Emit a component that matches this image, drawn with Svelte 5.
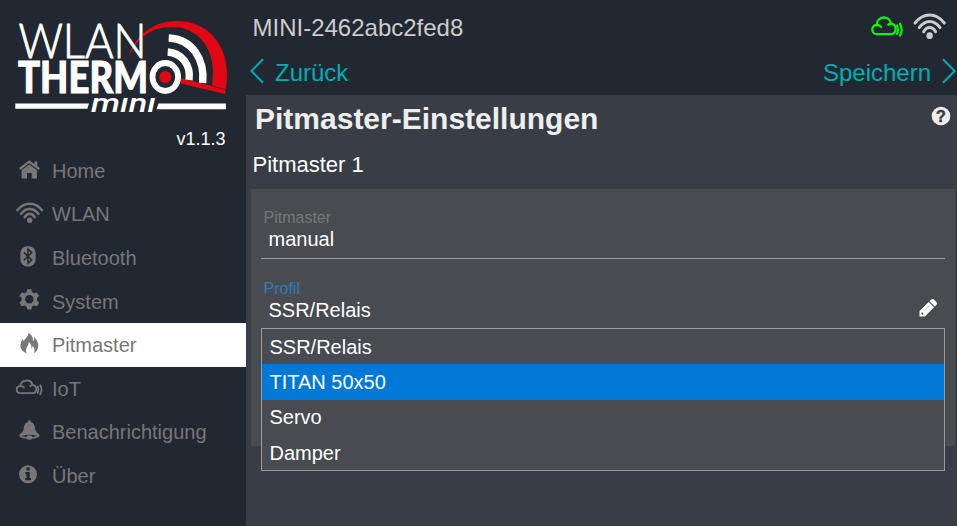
<script>
  const items = [
    { icon: 'home', label: 'Home' },
    { icon: 'wifi', label: 'WLAN' },
    { icon: 'bluetooth', label: 'Bluetooth' },
    { icon: 'gear', label: 'System' },
    { icon: 'fire', label: 'Pitmaster' },
    { icon: 'cloud', label: 'IoT' },
    { icon: 'bell', label: 'Benachrichtigung' },
    { icon: 'info', label: 'Über' }
  ];
  const active = 'Pitmaster';
  const options = ['SSR/Relais', 'TITAN 50x50', 'Servo', 'Damper'];
  let highlighted = $state('TITAN 50x50');
</script>

{#snippet wifi()}
  <g fill="none" stroke="currentColor" stroke-width="2.5" stroke-linecap="round">
    <path d="M3.4 11.2C10.3 2.7 21.1 2.7 28 11.2" />
    <path d="M7 14.8C12 8.3 19.4 8.3 24.4 14.8" />
    <path d="M10.7 18.1C13.3 13.6 18.1 13.6 20.7 18.1" />
  </g>
  <circle cx="15.7" cy="21.3" r="2.7" fill="currentColor" />
{/snippet}

{#snippet cloud()}
  <g fill="none" stroke="currentColor" stroke-width="1.8" stroke-linecap="round" stroke-linejoin="round">
    <path d="M6.6 19.2C1.6 19.2 1.4 12.4 6.3 12.2C6.8 5 17.3 4.6 18.6 11.2C23.5 11 23.6 19.2 18.8 19.2Z" />
    <path d="M6.3 12.2C8 11.8 9.3 12.5 10 13.7M18.6 11.2C17.6 11.2 16.8 11.5 16.2 12" />
    <path d="M23.7 12.6Q25 15.8 23.7 19M26.2 11.3Q28.8 15.8 26.2 20.2" />
  </g>
{/snippet}

<div class="app">
  <aside>
    <div class="brand">
      <svg class="logo" width="246" height="126" viewBox="0 0 246 126">
        <path fill="#e30613" d="M128.5 58C133 39 150 21 177 21C208 21 227 45 227 74Q227 85 225 94L181 83.5L180 78L212 86Q213 78 213 70C212 46 197 27 172 27C150 27 137 38 128.5 58Z" />
        <path d="M211 85.7L226 89.6" stroke="#222831" stroke-width="0.8" />
        <g fill="none" stroke="#fff" stroke-width="7.4">
          <path d="M168.7 38C192 39 205 59 202.7 83" />
          <path d="M167.7 52C182 53 191 65 189 80" />
        </g>
        <text class="wlan" x="18.5" y="57.5" textLength="128" lengthAdjust="spacingAndGlyphs">WLAN</text>
        <text class="therm" x="18" y="93" textLength="130" lengthAdjust="spacingAndGlyphs">THERM</text>
        <ellipse cx="165.3" cy="77" rx="12.8" ry="14" fill="#222831" stroke="#fff" stroke-width="5.8" />
        <circle cx="165.3" cy="77" r="6" fill="#e30613" />
        <path fill="#fff" d="M15.3 103.5H89L87.3 108.8H15.3ZM158.5 103.5H226V109.3H156.5Z" />
        <text class="mini" x="91" y="112" textLength="65" lengthAdjust="spacingAndGlyphs">mını</text>
      </svg>
      <div class="version">v1.1.3</div>
    </div>
    <nav>
      {#each items as item}
        <div class="item" class:active={item.label === active}>
          <svg width="32" height="30" viewBox="0 0 32 30">
            {#if item.icon === 'home'}
              <path d="M5.8 13L15.3 5.7L25.3 13" fill="none" stroke="currentColor" stroke-width="2.3" />
              <path d="M20.5 5.4H23.2V11L20.5 9Z" fill="currentColor" />
              <path d="M7.6 14.2L15.3 8.4L23 14.2V22.5H17.7V17H13V22.5H7.6Z" fill="currentColor" />
            {:else if item.icon === 'wifi'}
              {@render wifi()}
            {:else if item.icon === 'bluetooth'}
              <rect x="6.4" y="3.2" width="15.2" height="20.2" rx="6.8" fill="currentColor" />
              <path d="M9.8 9.4L17.8 17L14 20.4V6.2L17.8 9.6L9.8 17.2" fill="none" stroke="#222831" stroke-width="1.5" />
            {:else if item.icon === 'gear'}
              <path fill="currentColor" fill-rule="evenodd" d="M13.3 3.3H17.3L18 6.1L20 7.2L23 6.4L25.1 9.9L23 12V14.6L25.1 16.7L23 20.3L20 19.4L18 20.6L17.3 23.4H13.3L12.6 20.6L10.6 19.4L7.6 20.3L5.5 16.7L7.6 14.6V12L5.5 9.9L7.6 6.4L10.6 7.2L12.6 6.1ZM15.3 9.1A4.2 4.2 0 1 0 15.3 17.5A4.2 4.2 0 1 0 15.3 9.1Z" />
            {:else if item.icon === 'fire'}
              <path fill="currentColor" d="M14.3 3C18 5 19.3 7.4 18.9 11.2C20 10.5 20.6 8.7 20.2 7C24.5 11.3 26.7 18.7 20.2 23.2C21 20 20.4 17.8 18.8 15.8C18.7 17 18.2 17.8 17.4 18.2C17.7 15.7 16.7 13.4 14.7 12C15 15.6 10.8 17.6 12.4 23.3C5.4 20.4 5 14.2 9 8.8C9.1 10.2 9.4 11 10.1 11.5C10.4 8.2 14.6 7 14.3 3Z" />
            {:else if item.icon === 'cloud'}
              {@render cloud()}
            {:else if item.icon === 'bell'}
              <path fill="currentColor" d="M14.2 5V3.8Q15.4 2.2 16.6 3.8V5C20.2 6 20.8 9 21.2 12.2C21.6 15 23.4 16 25 17.3C27 20 21.8 22 15.4 22C9 22 3.8 20 5.8 17.3C7.4 16 9.2 15 9.6 12.2C10 9 10.6 6 14.2 5Z" />
              <path d="M7.7 18.9Q15.4 16.4 23.1 18.9Q15.4 21.6 7.7 18.9Z" fill="#222831" />
              <ellipse cx="15.4" cy="20.5" rx="3" ry="2.2" fill="currentColor" />
            {:else}
              <circle cx="14" cy="13.3" r="9" fill="currentColor" />
              <path fill="#222831" d="M12.4 6.5H15.7V9.5H12.4ZM11.3 11H15.7V17H17V19.3H11.3V17H12.5V13.2H11.3Z" />
            {/if}
          </svg>
          <span>{item.label}</span>
        </div>
      {/each}
    </nav>
  </aside>

  <main>
    <header>
      <div class="status">
        <span class="device">MINI-2462abc2fed8</span>
        <svg class="online" width="38" height="38" viewBox="0 0 32 29" preserveAspectRatio="none">{@render cloud()}</svg>
        <svg class="signal" width="38" height="38" viewBox="0 0 32 30.3" preserveAspectRatio="none">{@render wifi()}</svg>
      </div>
      <div class="actions">
        <svg width="14" height="26" viewBox="0 0 14 26"><path d="M13 1.3L1.4 13L13 24.7" /></svg>
        <span class="back">Zurück</span>
        <span class="save">Speichern</span>
        <svg width="14" height="26" viewBox="0 0 14 26"><path d="M1 1.3L12.6 13L1 24.7" /></svg>
      </div>
    </header>
    <section>
      <div class="heading">
        <h1>Pitmaster-Einstellungen</h1>
        <svg width="20" height="20" viewBox="0 0 20 20">
          <circle cx="10" cy="10" r="9.3" fill="#eee" />
          <text x="10" y="15.7" text-anchor="middle" class="question">?</text>
        </svg>
      </div>
      <h2>Pitmaster 1</h2>
      <div class="panel">
        <div class="field">
          <label for="mode">Pitmaster</label>
          <div class="value" id="mode">manual</div>
        </div>
        <div class="field focused">
          <label for="profile">Profil</label>
          <div class="value" id="profile">
            <span>SSR/Relais</span>
            <svg width="20" height="20" viewBox="0 0 20 20">
              <path fill="#fff" d="M1.5 18.5V13L10.7 4L16 9.3L6.8 18.5ZM11.5 3.2L13 1.7Q14.6.3 16.2 1.7L18.4 3.9Q19.8 5.4 18.4 7L16.8 8.5Z" />
              <path d="M3.6 14.8L5.2 16.4" stroke="#484b4f" stroke-width="1.4" />
              <path d="M6 12.8L11.5 7.3" stroke="#484b4f" stroke-width="0.3" />
            </svg>
          </div>
          <div class="menu">
            {#each options as option}
              <div
                class="option"
                class:highlighted={option === highlighted}
                role="option"
                tabindex="-1"
                aria-selected={option === highlighted}
                onmouseenter={() => (highlighted = option)}
              >{option}</div>
            {/each}
          </div>
        </div>
      </div>
    </section>
  </main>
</div>

<style>
  :global(body) {
    margin: 0;
  }
  .app {
    display: flex;
    width: 957px;
    height: 526px;
    overflow: hidden;
    background: #222831;
    color: #fff;
    font-family: 'Liberation Sans', Arial, sans-serif;
  }
  svg {
    display: block;
    flex: none;
  }
  aside {
    width: 246px;
    flex: none;
  }
  .brand {
    height: 148.8px;
  }
  .version {
    padding-right: 20.5px;
    text-align: right;
    font-size: 18px;
    line-height: 26px;
  }
  .wlan {
    font: 300 47.5px Lato, sans-serif;
    fill: #fff;
    stroke: #fff;
    stroke-width: 0.9px;
  }
  .therm {
    font: 900 44.5px Lato, sans-serif;
    fill: #fff;
    stroke: #fff;
    stroke-width: 1px;
  }
  .mini {
    font: italic 500 26.5px Roboto, sans-serif;
    fill: #fff;
  }
  .item {
    box-sizing: border-box;
    display: flex;
    align-items: center;
    height: 43.6px;
    padding-left: 14px;
    gap: 6px;
    color: #777;
    font-size: 20px;
  }
  .item span {
    padding-top: 1.6px;
  }
  .item.active {
    background: #fff;
  }
  main {
    flex: 1;
    min-width: 0;
    display: flex;
    flex-direction: column;
  }
  header {
    height: 95px;
  }
  .status {
    display: flex;
    align-items: center;
    height: 55px;
    padding: 0 8px 0 6.5px;
  }
  .device {
    flex: 1;
    font-size: 24px;
    color: #ccc;
  }
  .online {
    color: #0f0;
    margin: 0 4px 0 0;
  }
  .signal {
    color: #ccc;
    margin-bottom: 0;
  }
  .actions {
    display: flex;
    align-items: center;
    height: 31px;
    padding: 0 1px 0 4px;
    color: #00adb5;
    font-size: 24px;
  }
  .actions svg path {
    fill: none;
    stroke: #00adb5;
    stroke-width: 2;
  }
  .back {
    margin: 4px auto 0 11px;
  }
  .save {
    margin: 4px 11px 0 0;
  }
  section {
    flex: 1;
    background: #393e46;
  }
  .heading {
    display: flex;
    justify-content: space-between;
    align-items: center;
    height: 48px;
    padding: 0 6px 0 9px;
    color: #eee;
  }
  .heading svg {
    margin-bottom: 6px;
  }
  h1 {
    margin: 0;
    font-size: 30px;
    font-weight: bold;
  }
  .question {
    font: bold 16px 'Liberation Sans', Arial, sans-serif;
    fill: #393e46;
    stroke: #393e46;
    stroke-width: 0.5px;
  }
  h2 {
    margin: 0;
    height: 46px;
    padding-left: 6.5px;
    font-size: 22px;
    line-height: 43px;
    font-weight: normal;
  }
  .panel {
    box-sizing: border-box;
    height: 257px;
    margin: 0 2px 0 5px;
    padding: 19px 10px 0;
    background: #484b4f;
  }
  .field {
    box-sizing: border-box;
    position: relative;
    height: 51px;
    margin-bottom: 20px;
    border-bottom: 1px solid #999;
  }
  .focused {
    height: 50px;
    border-bottom-color: #337ab7;
  }
  label {
    display: block;
    padding-left: 2.5px;
    font-size: 16px;
    line-height: 19px;
    color: #777;
  }
  .focused label {
    color: #337ab7;
  }
  .value {
    display: flex;
    justify-content: space-between;
    padding: 0 7px 0 7.5px;
    font-size: 20px;
    line-height: 24px;
  }
  .menu {
    position: absolute;
    box-sizing: border-box;
    top: 49px;
    left: 0;
    right: 0;
    height: 143px;
    border: 1px solid #999;
    background: #484b4f;
  }
  .option {
    height: 35.2px;
    padding-left: 7.5px;
    font-size: 20px;
    line-height: 36px;
  }
  .highlighted {
    height: 36px;
    margin-bottom: -0.8px;
    background: #0078d7;
  }
</style>
